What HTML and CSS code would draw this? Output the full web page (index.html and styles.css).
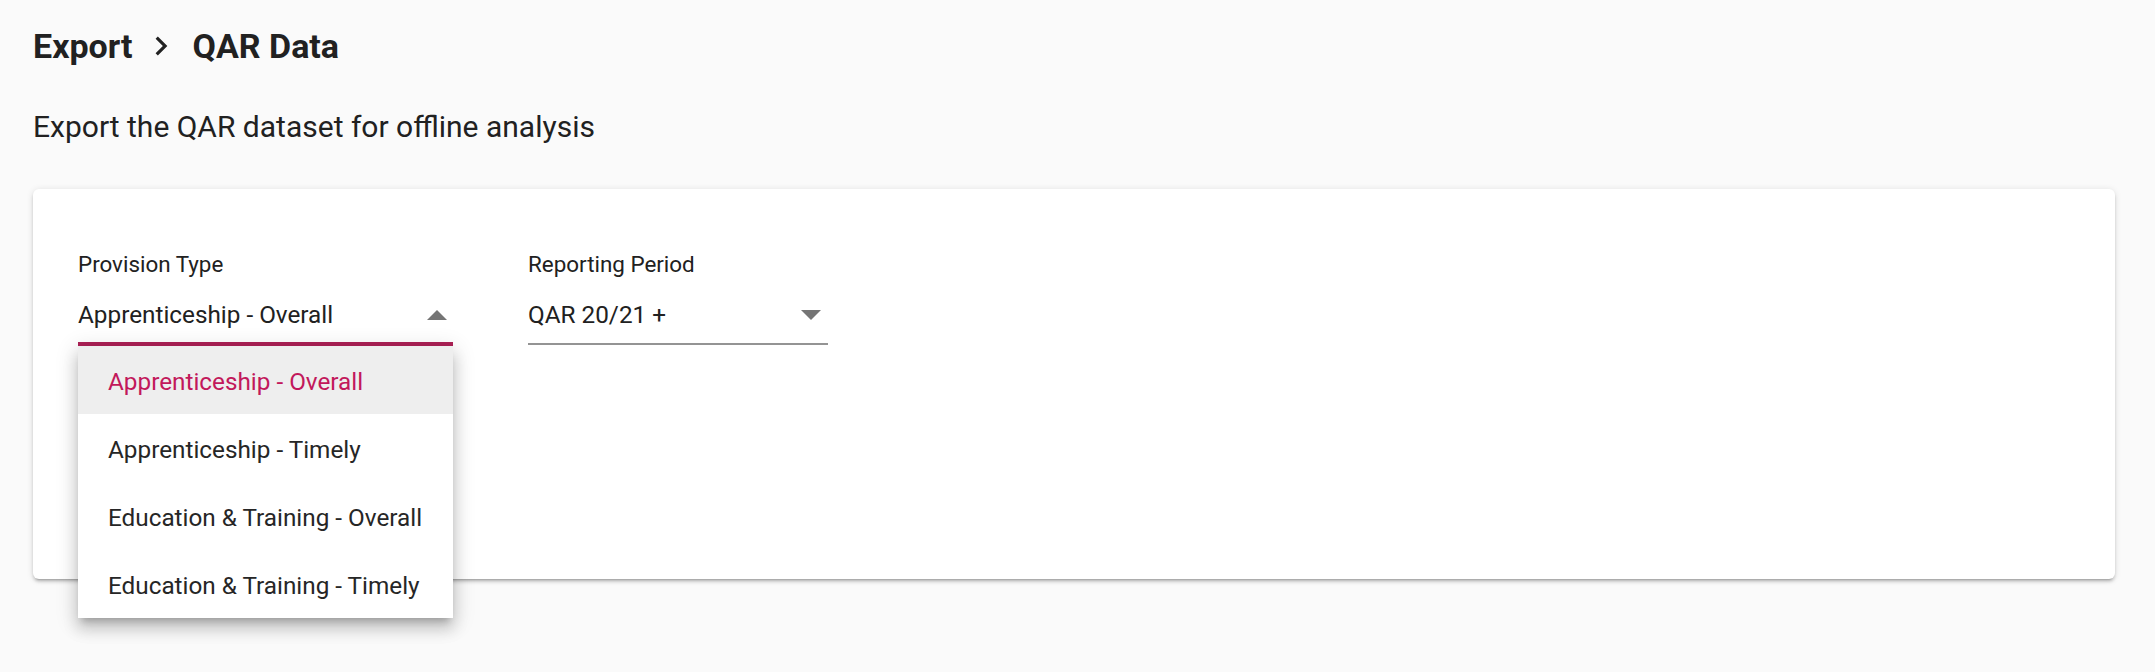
FILE: index.html
```html
<!DOCTYPE html>
<html lang="en">
<head>
<meta charset="utf-8">
<title>Export QAR Data</title>
<link rel="stylesheet" href="styles.css">
</head>
<body class="page">
  <div class="breadcrumb">
    <span class="crumb">Export</span>
    <svg class="crumb-sep" viewBox="0 0 24 24" aria-hidden="true"><path d="M10 6L8.59 7.41 13.17 12l-4.58 4.59L10 18l6-6z"/></svg>
    <span class="crumb">QAR Data</span>
  </div>
  <p class="subtitle">Export the QAR dataset for offline analysis</p>
  <div class="card">
    <div class="form-row">
      <div class="field field-provision">
        <div class="field-label">Provision Type</div>
        <div class="field-trigger">
          <span class="field-value">Apprenticeship - Overall</span>
          <span class="arrow arrow-up"></span>
        </div>
        <div class="underline underline-active"></div>
        <ul class="panel">
          <li class="option option-selected">Apprenticeship - Overall</li>
          <li class="option">Apprenticeship - Timely</li>
          <li class="option">Education &amp; Training - Overall</li>
          <li class="option">Education &amp; Training - Timely</li>
        </ul>
      </div>
      <div class="field field-period">
        <div class="field-label">Reporting Period</div>
        <div class="field-trigger">
          <span class="field-value">QAR 20/21 +</span>
          <span class="arrow arrow-down"></span>
        </div>
        <div class="underline underline-idle"></div>
      </div>
    </div>
  </div>
</body>
</html>
```
FILE: styles.css
```css
* { box-sizing: border-box; }

html, body { margin: 0; }

.page {
  background: #fafafa;
  font-family: Roboto, "Liberation Sans", Arial, sans-serif;
  color: #212121;
  padding: 26px 40px 0 33px;
  min-height: 672px;
}

.breadcrumb {
  display: flex;
  align-items: center;
  height: 40px;
  font-size: 34px;
  font-weight: 700;
  line-height: 40px;
  color: #212121;
}

.crumb-sep {
  width: 38px;
  height: 38px;
  margin: 0 13px 0 9px;
  fill: #212121;
}

.subtitle {
  margin: 43px 0 0 0;
  font-size: 30px;
  line-height: 36px;
  font-weight: 400;
  color: #212121;
}

.card {
  margin-top: 44px;
  background: #fff;
  border-radius: 6px;
  padding: 61px 45px 233px 45px;
  box-shadow: 0 4px 2px -3px rgba(0,0,0,0.2), 0 3px 3px 0 rgba(0,0,0,0.14), 0 1px 7px 0 rgba(0,0,0,0.12);
}

.form-row {
  display: flex;
  gap: 75px;
}

.field {
  position: relative;
  display: flex;
  flex-direction: column;
}

.field-provision { width: 375px; }
.field-period { width: 300px; }

.field-label {
  font-size: 22.4px;
  line-height: 28px;
  color: #212121;
}

.field-trigger {
  display: flex;
  align-items: center;
  justify-content: space-between;
  height: 28px;
  margin-top: 23px;
  margin-bottom: 13px;
  font-size: 24.3px;
  line-height: 28px;
}

.arrow {
  width: 0;
  height: 0;
  border-left: 10px solid transparent;
  border-right: 10px solid transparent;
  margin-right: 6px;
}

.arrow-up { border-bottom: 10px solid #757575; }
.arrow-down { border-top: 10px solid #757575; margin-right: 7px; }

.underline { width: 100%; }
.underline-active { height: 4px; background: #ad2156; }
.underline-idle { height: 2px; margin-top: 1px; margin-bottom: 1px; background: #949494; }

.panel {
  position: absolute;
  top: 100%;
  left: 0;
  width: 375px;
  margin: 0;
  padding: 0;
  list-style: none;
  background: #fff;
  z-index: 10;
  box-shadow: 0 7px 7px -4px rgba(0,0,0,0.2), 0 11px 14px 1px rgba(0,0,0,0.14), 0 4px 20px 3px rgba(0,0,0,0.12);
}

.option {
  height: 68px;
  padding: 3px 0 0 30px;
  font-size: 24.3px;
  line-height: 65px;
  color: #262626;
  white-space: nowrap;
}

.option-selected {
  background: #eeeeee;
  color: #c2185b;
}
```
